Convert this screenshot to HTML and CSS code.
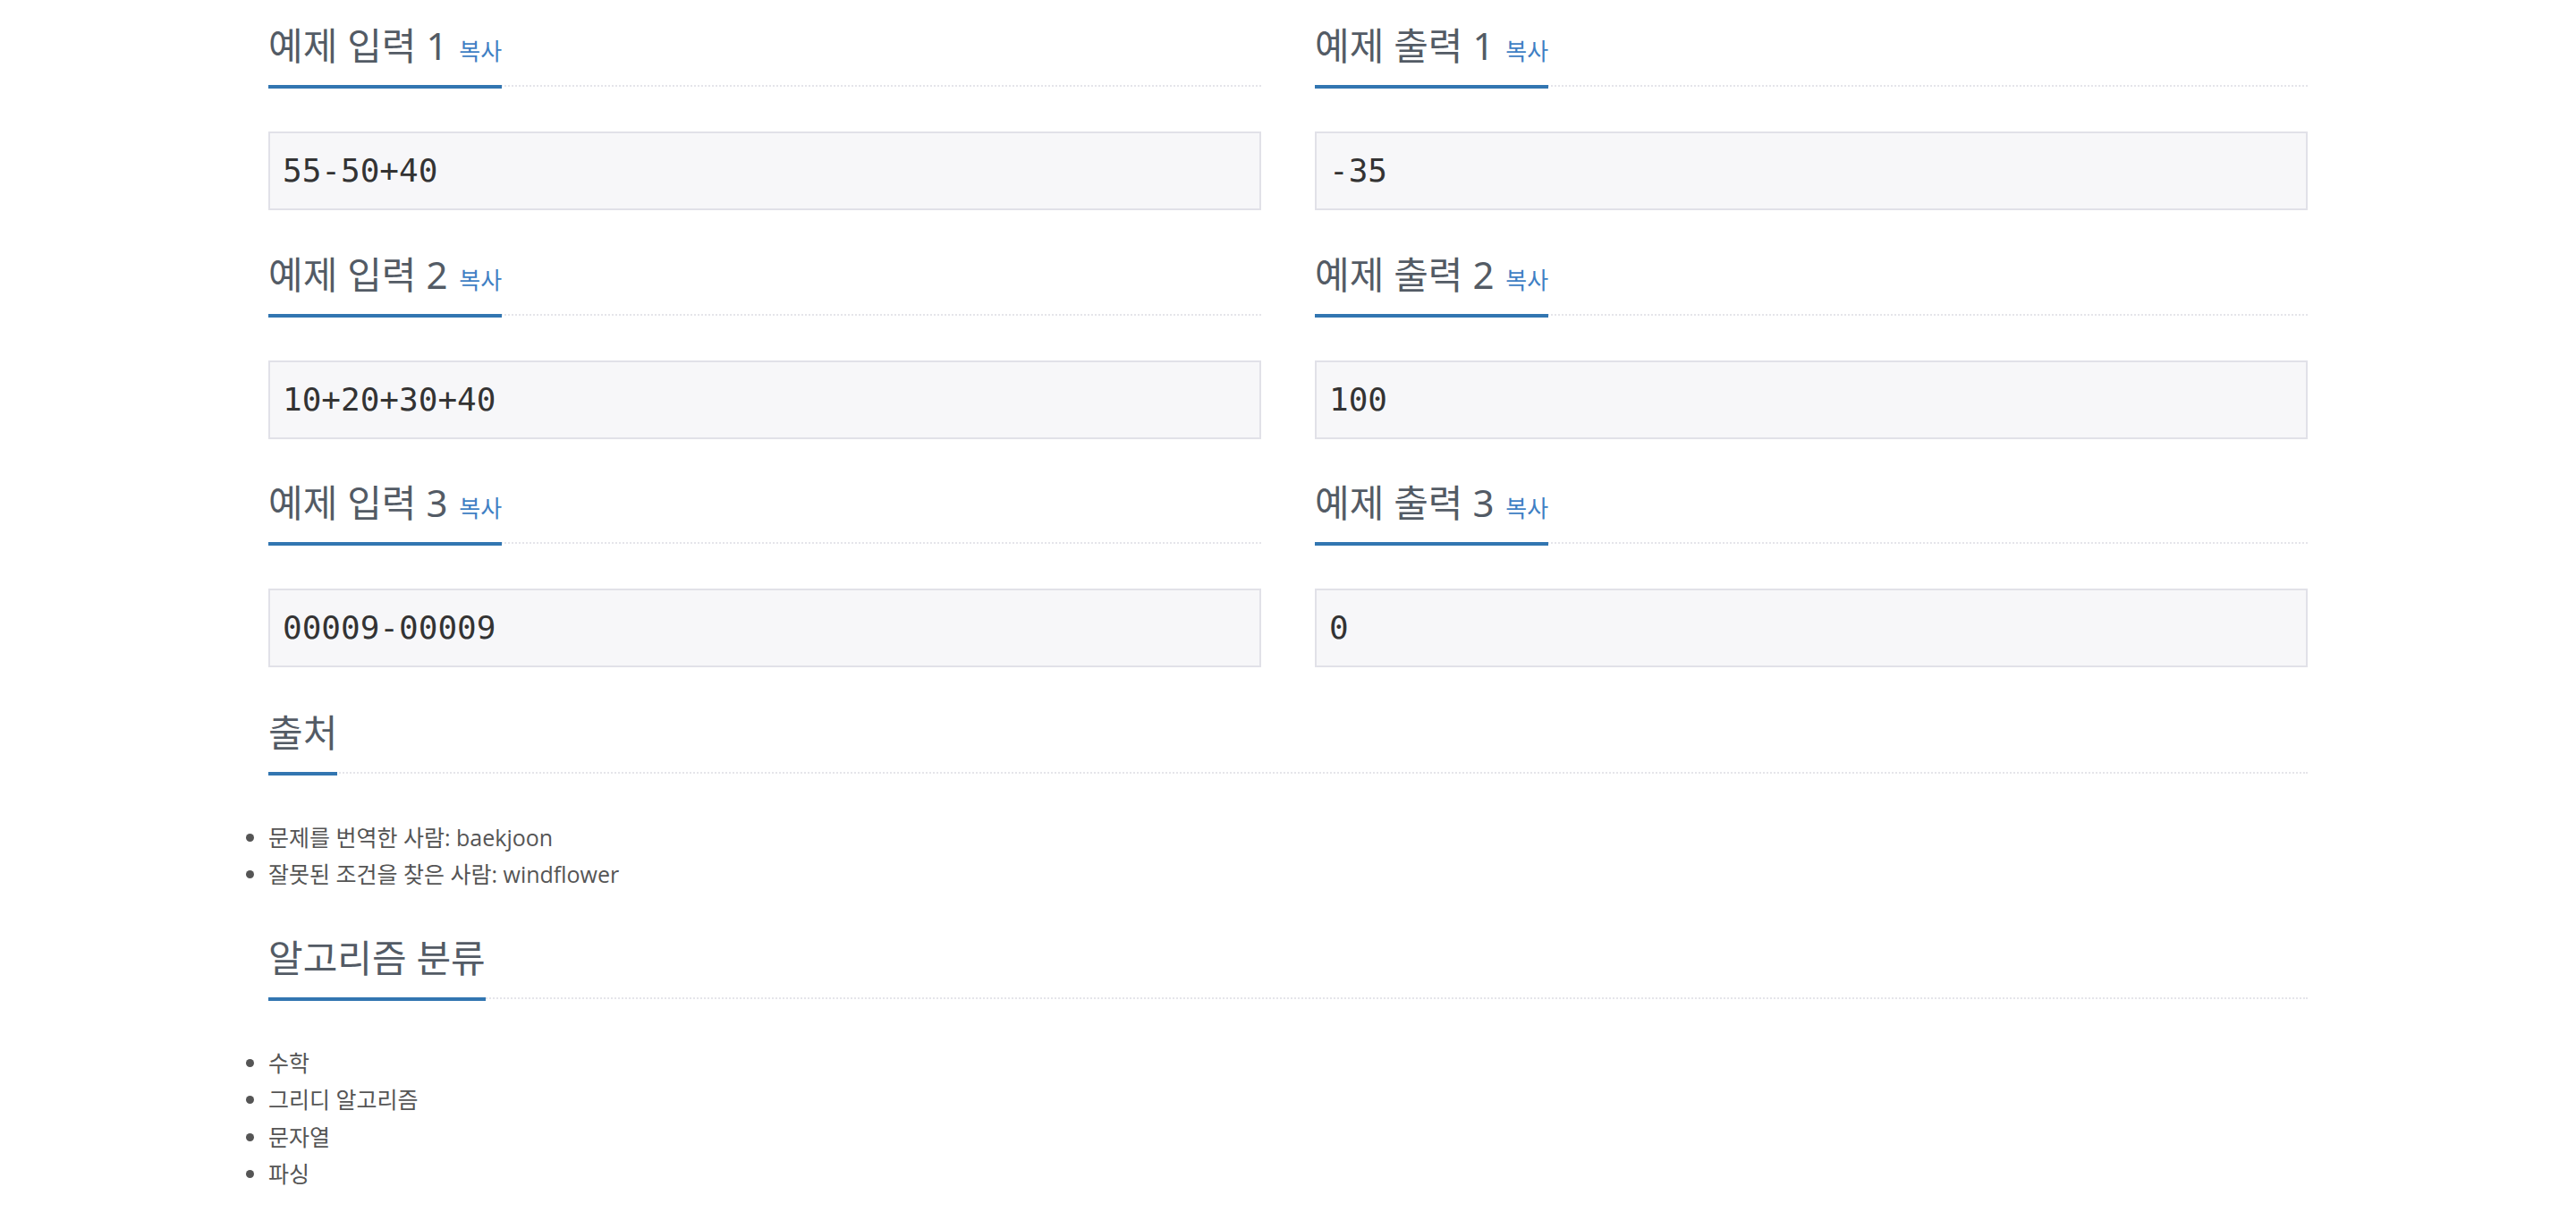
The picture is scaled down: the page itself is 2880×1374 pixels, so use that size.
FILE: index.html
```html
<!DOCTYPE html>
<html lang="ko">
<head>
<meta charset="utf-8">
<title>예제</title>
<link rel="stylesheet" href="styles.css">
</head>
<body>
<div class="container">
  <div class="samples">
    <section class="sample">
      <div class="headline"><h2>예제 입력 1 <a class="copy">복사</a></h2></div>
      <pre class="sampledata">55-50+40</pre>
    </section>
    <section class="sample">
      <div class="headline"><h2>예제 출력 1 <a class="copy">복사</a></h2></div>
      <pre class="sampledata">-35</pre>
    </section>
    <section class="sample">
      <div class="headline"><h2>예제 입력 2 <a class="copy">복사</a></h2></div>
      <pre class="sampledata">10+20+30+40</pre>
    </section>
    <section class="sample">
      <div class="headline"><h2>예제 출력 2 <a class="copy">복사</a></h2></div>
      <pre class="sampledata">100</pre>
    </section>
    <section class="sample">
      <div class="headline"><h2>예제 입력 3 <a class="copy">복사</a></h2></div>
      <pre class="sampledata">00009-00009</pre>
    </section>
    <section class="sample">
      <div class="headline"><h2>예제 출력 3 <a class="copy">복사</a></h2></div>
      <pre class="sampledata">0</pre>
    </section>
  </div>
  <section class="block">
    <div class="headline"><h2>출처</h2></div>
    <ul class="info">
      <li>문제를 번역한 사람: baekjoon</li>
      <li>잘못된 조건을 찾은 사람: windflower</li>
    </ul>
  </section>
  <section class="block">
    <div class="headline"><h2>알고리즘 분류</h2></div>
    <ul class="info">
      <li>수학</li>
      <li>그리디 알고리즘</li>
      <li>문자열</li>
      <li>파싱</li>
    </ul>
  </section>
</div>
</body>
</html>
```
FILE: styles.css
```css
html, body {
  margin: 0;
  padding: 0;
  background: #ffffff;
}
body {
  font-family: "Open Sans", "Noto Sans CJK KR", sans-serif;
  color: #555555;
}
.container {
  width: 2280px;
  margin: 0 auto;
}
.samples {
  display: grid;
  grid-template-columns: 1110px 1110px;
  column-gap: 60px;
}
.headline {
  display: flex;
  align-items: flex-end;
  border-bottom: 2px dotted #e5e5ea;
}
.headline h2 {
  margin: 27px 0 -4px 0;
  padding: 0 0 20px 0;
  border-bottom: 4px solid #3276b1;
  font-family: "Noto Sans", "Noto Sans CJK KR", sans-serif;
  font-weight: 400;
  font-size: 42px;
  line-height: 48px;
  color: #535b65;
  white-space: nowrap;
}
.copy {
  margin-left: 2px;
  font-size: 26px;
  line-height: 1;
  color: #3f7fc4;
  text-decoration: none;
}
.sampledata {
  margin: 50px 0 20.5px 0;
  padding: 18px 14px;
  background: #f7f7f9;
  border: 2px solid #e1e1e8;
  font-family: "DejaVu Sans Mono", monospace;
  font-size: 36px;
  line-height: 48px;
  color: #333333;
}
.block .headline h2 {
  margin-top: 28px;
}
.info {
  margin: 51px 0 20px 0;
  padding: 0;
  font-size: 25px;
  line-height: 41.6px;
  color: #555555;
}
.info li {
  margin: 0;
}
```
